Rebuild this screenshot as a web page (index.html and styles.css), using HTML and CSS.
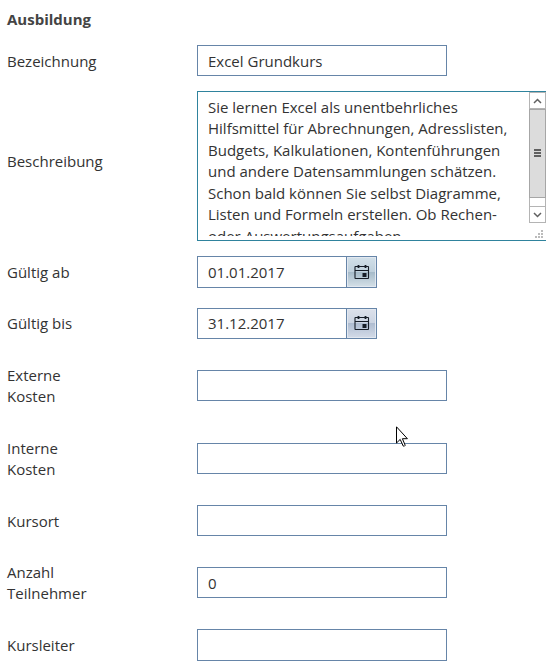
FILE: index.html
```html
<!DOCTYPE html>
<html lang="de">
<head>
<meta charset="utf-8">
<title>Ausbildung</title>
<link rel="stylesheet" href="styles.css">
</head>
<body>
<svg class="defs" width="0" height="0">
  <symbol id="calendar" viewBox="0 0 16 16">
    <rect x="1" y="2.500" width="13.500" height="12" rx=".5" fill="none" stroke="#151c26" stroke-width="1.1"/>
    <path d="M1 6.500h13.500" stroke="#151c26"/>
    <path d="M4.500 1v3M11.500 1v3" stroke="#151c26" stroke-width="1.800"/>
    <path d="M8.500 9h4v4h-4z" fill="#151c26"/>
  </symbol>
</svg>
<main class="form">
  <h1 class="title">Ausbildung</h1>
  <div class="row row-single"><div class="label">Bezeichnung</div><div class="field">Excel Grundkurs</div></div>
  <div class="row row-area">
    <div class="label">Beschreibung</div>
    <div class="area">
      <div class="area-text">Sie lernen Excel als unentbehrliches<br>Hilfsmittel für Abrechnungen, Adresslisten,<br>Budgets, Kalkulationen, Kontenführungen<br>und andere Datensammlungen schätzen.<br>Schon bald können Sie selbst Diagramme,<br>Listen und Formeln erstellen. Ob Rechen-<br>oder Auswertungsaufgaben</div>
      <div class="side">
        <div class="arrow"><svg width="9" height="6" viewBox="0 0 9 6"><path d="M1 5l3.500-3.500L8 5" fill="none" stroke="#606060" stroke-width="1.500"/></svg></div>
        <div class="thumb"><i></i><i></i><i></i></div>
        <div class="track"></div>
        <div class="arrow"><svg width="9" height="6" viewBox="0 0 9 6"><path d="M1 1l3.500 3.500L8 1" fill="none" stroke="#606060" stroke-width="1.500"/></svg></div>
        <svg class="grip" width="8" height="8" viewBox="0 0 8 8"><path d="M6 0h2v2H6zM3 3h2v2H3zM6 3h2v2H6zM0 6h2v2H0zM3 6h2v2H3zM6 6h2v2H6z" fill="#bbb"/></svg>
      </div>
    </div>
  </div>
  <div class="row row-from"><div class="label">Gültig ab</div><div class="date tall"><div class="date-value">01.01.2017</div><div class="pick pick-active"><svg width="16" height="16"><use href="#calendar"/></svg></div></div></div>
  <div class="row row-to"><div class="label">Gültig bis</div><div class="date"><div class="date-value">31.12.2017</div><div class="pick"><svg width="16" height="16"><use href="#calendar"/></svg></div></div></div>
  <div class="row row-ext"><div class="label">Externe<br>Kosten</div><div class="field"></div></div>
  <div class="row row-double"><div class="label">Interne<br>Kosten</div><div class="field"></div></div>
  <div class="row row-single"><div class="label">Kursort</div><div class="field"></div></div>
  <div class="row row-double"><div class="label">Anzahl<br>Teilnehmer</div><div class="field">0</div></div>
  <div class="row row-from"><div class="label">Kursleiter</div><div class="field tall"></div></div>
</main>
<svg class="cursor" width="13" height="22" viewBox="0 0 13 22"><path d="M.5.8v16.200l3.700-3.600 3 6.600q1.200.8 2-.7l-2.800-6.600h5z" fill="#fff" stroke="#000"/></svg>
</body>
</html>
```
FILE: styles.css
```css
* { box-sizing: border-box; }
body {
  margin: 0;
  height: 666px;
  overflow: hidden;
  position: relative;
  background: #fff;
  color: #333;
  font: 15px/21px "Open Sans", sans-serif;
}
.defs { position: absolute; }
.form { padding-left: 7px; }
.title {
  margin: 0;
  height: 38px;
  padding-top: 9px;
  font-size: 15px;
  line-height: 21px;
  font-weight: 700;
  color: #444;
}
.row { display: flex; align-items: center; height: 45px; }
.row-area { height: 166px; }
.row-from { height: 46px; }
.row-to { height: 57px; }
.row-ext { height: 67px; }
.row-double { height: 79px; }
.label { width: 190px; flex: none; }
.row-single .label { padding-top: 2px; }
.row-area .label { padding-bottom: 10px; }
.row-to .label { padding-bottom: 1px; }
.field {
  width: 250px;
  height: 31px;
  border: 1px solid #6685a8;
  padding: 5px 10px;
}
.area {
  width: 360px;
  flex: none;
  height: 150px;
  border: 1px solid #2f839d;
  display: flex;
}
.area-text {
  width: 330px;
  height: 144px;
  padding: 5px 0 0 10px;
  line-height: 21.45px;
  overflow: hidden;
  white-space: nowrap;
}
.side { width: 17px; display: flex; flex-direction: column; margin-left: 1px; }
.arrow {
  height: 17px;
  flex: none;
  border: 1px solid #b4b4b4;
  display: flex;
  align-items: center;
  justify-content: center;
}
.thumb {
  height: 89px;
  padding-bottom: 2px;
  border: 1px solid #a6a6a6;
  background: #dcdcdc;
  display: flex;
  flex-direction: column;
  align-items: center;
  justify-content: center;
  gap: 1px;
}
.thumb i { width: 7px; height: 2px; background: #606060; }
.track { height: 8px; border: solid #b4b4b4; border-width: 0 1px; }
.grip { margin: 7px 0 0 6px; }
.date {
  display: flex;
  width: 180px;
  height: 31px;
  border: 1px solid #6685a8;
}
.date-value { width: 148px; padding: 4px 10px; }
.tall { height: 32px; }
.tall .date-value { padding-top: 5px; }
.pick {
  flex: 1;
  border-left: 1px solid #6685a8;
  display: flex;
  align-items: center;
  justify-content: center;
  background: linear-gradient(#dce1eb, #cbd4e2 50%, #afbdd1 50%, #d3dbe8);
  box-shadow: inset 0 0 0 1px #e2e8f0;
}
.pick svg { margin-bottom: 1px; }
.pick-active { background: linear-gradient(#d2e0e9, #bfd0dc 50%, #a5bac9 50%, #d4e0e7); }
.cursor { position: absolute; left: 396px; top: 426px; }
```
